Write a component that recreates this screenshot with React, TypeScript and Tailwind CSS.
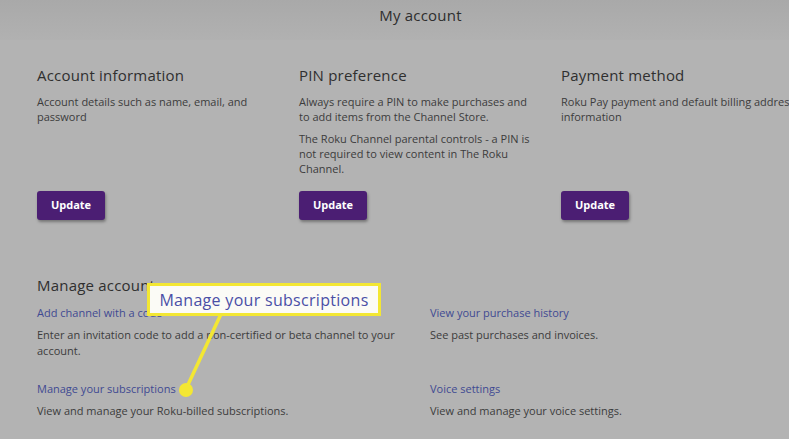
import React from 'react';

const font = { fontFamily: '"Open Sans", "Liberation Sans", sans-serif' };

const cards = [
  {
    title: 'Account information',
    body: [['Account details such as name, email, and', 'password']],
  },
  {
    title: 'PIN preference',
    body: [
      ['Always require a PIN to make purchases and', 'to add items from the Channel Store.'],
      ['The Roku Channel parental controls - a PIN is', 'not required to view content in The Roku', 'Channel.'],
    ],
  },
  {
    title: 'Payment method',
    body: [['Roku Pay payment and default billing address', 'information']],
  },
];

const links = [
  { label: 'Add channel with a code', text: ['Enter an invitation code to add a non-certified or beta channel to your', 'account.'] },
  { label: 'View your purchase history', text: ['See past purchases and invoices.'] },
  { label: 'Manage your subscriptions', text: ['View and manage your Roku-billed subscriptions.'] },
  { label: 'Voice settings', text: ['View and manage your voice settings.'] },
];

const Lines: React.FC<{ lines: string[] }> = ({ lines }) => (
  <>
    {lines.map((l, i) => (
      <span key={i} className="block whitespace-nowrap">{l}</span>
    ))}
  </>
);

const App: React.FC = () => {
  return (
    <div className="relative w-[789px] h-[439px] overflow-hidden bg-[#b3b3b3] text-[#363636]" style={font}>
      {/* Header */}
      <div className="h-[40px] bg-gradient-to-b from-[#a9a9a9] to-[#b1b1b1] flex items-center justify-center pl-[52px] pb-[9px]">
        <h1 className="text-[15px] text-[#2e2e2e] tracking-[0.2px]">My account</h1>
      </div>

      {/* Cards */}
      <div className="grid grid-cols-[262px_262px_262px] pl-[37px] pt-[25px]">
        {cards.map((c) => (
          <div key={c.title} className="flex flex-col h-[155px]">
            <h2 className="text-[15px] leading-[20px] text-[#2f2f2f] tracking-[0.2px] mb-[9px]">{c.title}</h2>
            <div className="flex flex-col gap-[6px] text-[11px] leading-[15.3px] text-[#3c3c3c]">
              {c.body.map((p, i) => (
                <p key={i}>
                  <Lines lines={p} />
                </p>
              ))}
            </div>
            <button className="mt-auto w-[68px] h-[29px] rounded-[3px] bg-[#4b1e73] text-white text-[11px] font-bold shadow-[1px_2px_3px_rgba(0,0,0,0.35)]">
              Update
            </button>
          </div>
        ))}
      </div>

      {/* Manage account */}
      <div className="pl-[37px] pt-[55px]">
        <h2 className="text-[15px] leading-[20px] text-[#2f2f2f] tracking-[0.2px] mb-[10px]">Manage account</h2>
        <div className="grid grid-cols-[393px_300px] gap-y-[22px]">
          {links.map((l) => (
            <div key={l.label} className="flex flex-col gap-[7px]">
              <a className="text-[11px] leading-[15px] text-[#3f4a92]">{l.label}</a>
              <p className="text-[11px] leading-[16px] text-[#3c3c3c]">
                <Lines lines={l.text} />
              </p>
            </div>
          ))}
        </div>
      </div>

      {/* Callout */}
      <svg className="absolute left-0 top-0 pointer-events-none" width="789" height="439">
        <line x1="221" y1="314" x2="186" y2="389" stroke="#f3e733" strokeWidth="3.5" />
        <circle cx="186" cy="390" r="7" fill="#f3e733" />
      </svg>
      <div className="absolute left-[147px] top-[283px] w-[234px] h-[33px] border-[3px] border-[#f3e733] bg-[#fbfbf6] flex items-center justify-center">
        <span className="text-[16px] text-[#4a4fa6] tracking-[0.3px]">Manage your subscriptions</span>
      </div>
    </div>
  );
};

export default App;
